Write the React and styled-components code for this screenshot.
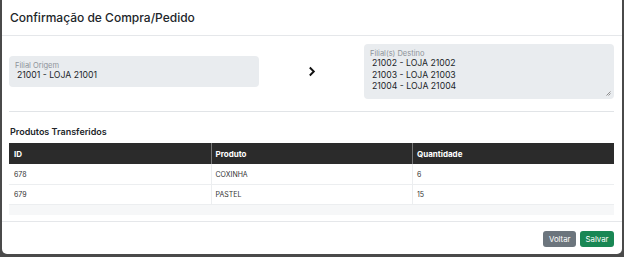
import React from 'react';
import styled, { createGlobalStyle } from 'styled-components';

const GlobalStyle = createGlobalStyle`
  html, body {
    margin: 0;
    padding: 0;
    background: #4a4a4a;
    font-family: 'Inter', 'Open Sans', sans-serif;
  }
`;

const Modal = styled.div`
  width: 620px;
  height: 254px;
  margin-left: 2px;
  background: #ffffff;
  border-radius: 0 0 5px 5px;
  display: flex;
  flex-direction: column;
  box-sizing: border-box;
  overflow: hidden;
`;

const Header = styled.div`
  height: 35px;
  padding: 0 8px;
  display: flex;
  align-items: center;
  border-bottom: 1px solid #e5e7ea;
`;

const Title = styled.h1`
  margin: 0;
  font-size: 12px;
  font-weight: 500;
  color: #212529;
`;

const Body = styled.div`
  flex: 1;
  padding: 8px 8px 0 7px;
`;

const FilialRow = styled.div`
  display: grid;
  grid-template-columns: 250px 1fr 250px;
  align-items: center;
  height: 55px;
`;

const Field = styled.div`
  background: #e9ecef;
  border-radius: 4px;
  height: ${(p) => p.h}px;
  padding: ${(p) => p.pad};
  box-sizing: border-box;
  position: relative;
  color: #212529;
`;

const Label = styled.div`
  font-size: 7.5px;
  color: #8d9399;
  line-height: 9px;
`;

const Value = styled.div`
  font-size: 8.7px;
  line-height: 11.5px;
  padding-left: 2px;
`;

const Arrow = styled.div`
  display: flex;
  justify-content: center;
`;

const Grip = styled.svg`
  position: absolute;
  right: 3px;
  bottom: 3px;
`;

const Divider = styled.div`
  border-top: 1px solid #e1e4e7;
  margin-top: 12px;
`;

const SectionTitle = styled.h2`
  margin: 14px 0 6px 1px;
  font-size: 9px;
  font-weight: 600;
  color: #212529;
`;

const TableWrap = styled.div`
  background: #f6f7f8;
  padding-bottom: 10px;
`;

const Table = styled.table`
  width: 100%;
  border-collapse: collapse;
  table-layout: fixed;
  font-size: 7px;
`;

const Th = styled.th`
  background: #2b2b2b;
  color: #ffffff;
  text-align: left;
  font-weight: 700;
  font-size: 8px;
  height: 21px;
  padding: 0 4px;
  border-left: 1px solid ${(p) => (p.first ? '#2b2b2b' : '#777')};
`;

const Td = styled.td`
  background: #ffffff;
  color: #333;
  height: ${(p) => p.h}px;
  padding: 0 4px;
  border-bottom: 1px solid #eceef0;
  border-left: 1px solid ${(p) => (p.first ? '#ffffff' : '#eceef0')};
`;

const Footer = styled.div`
  border-top: 1px solid #e5e7ea;
  height: 31px;
  padding: 3px 8px 0 0;
  box-sizing: border-box;
  display: flex;
  align-items: center;
  justify-content: flex-end;
  gap: 4px;
  margin-bottom: 2px;
`;

const Button = styled.button`
  border: none;
  border-radius: 3px;
  height: 16px;
  padding: 0 5.5px;
  font-family: inherit;
  font-size: 7.8px;
  color: #ffffff;
  background: ${(p) => p.bg};
`;

const rows = [
  { id: '678', produto: 'COXINHA', qtd: '6' },
  { id: '679', produto: 'PASTEL', qtd: '15' },
];

export default function App() {
  return (
    <>
      <GlobalStyle />
      <Modal>
        <Header>
          <Title>Confirmação de Compra/Pedido</Title>
        </Header>
        <Body>
          <FilialRow>
            <Field h={31} pad="5px 6px">
              <Label>Filial Origem</Label>
              <Value>21001 - LOJA 21001</Value>
            </Field>
            <Arrow>
              <svg width="8" height="11" viewBox="0 0 8 11">
                <path d="M1.8 1.5 L5.8 5.5 L1.8 9.5" fill="none" stroke="#111" strokeWidth="1.9" />
              </svg>
            </Arrow>
            <Field h={55} pad="5px 6px">
              <Label>Filial(s) Destino</Label>
              <Value>21002 - LOJA 21002</Value>
              <Value>21003 - LOJA 21003</Value>
              <Value>21004 - LOJA 21004</Value>
              <Grip width="5" height="5" viewBox="0 0 5 5">
                <path d="M0.5 4.5 L4.5 0.5 M2.5 4.5 L4.5 2.5" stroke="#777" strokeWidth="0.8" />
              </Grip>
            </Field>
          </FilialRow>
          <Divider />
          <SectionTitle>Produtos Transferidos</SectionTitle>
          <TableWrap>
            <Table>
              <thead>
                <tr>
                  <Th first>ID</Th>
                  <Th>Produto</Th>
                  <Th>Quantidade</Th>
                </tr>
              </thead>
              <tbody>
                {rows.map((r, i) => (
                  <tr key={r.id}>
                    <Td first h={i === 0 ? 20 : 19}>{r.id}</Td>
                    <Td h={i === 0 ? 20 : 19}>{r.produto}</Td>
                    <Td h={i === 0 ? 20 : 19}>{r.qtd}</Td>
                  </tr>
                ))}
              </tbody>
            </Table>
          </TableWrap>
        </Body>
        <Footer>
          <Button bg="#6c757d">Voltar</Button>
          <Button bg="#198754">Salvar</Button>
        </Footer>
      </Modal>
    </>
  );
}
